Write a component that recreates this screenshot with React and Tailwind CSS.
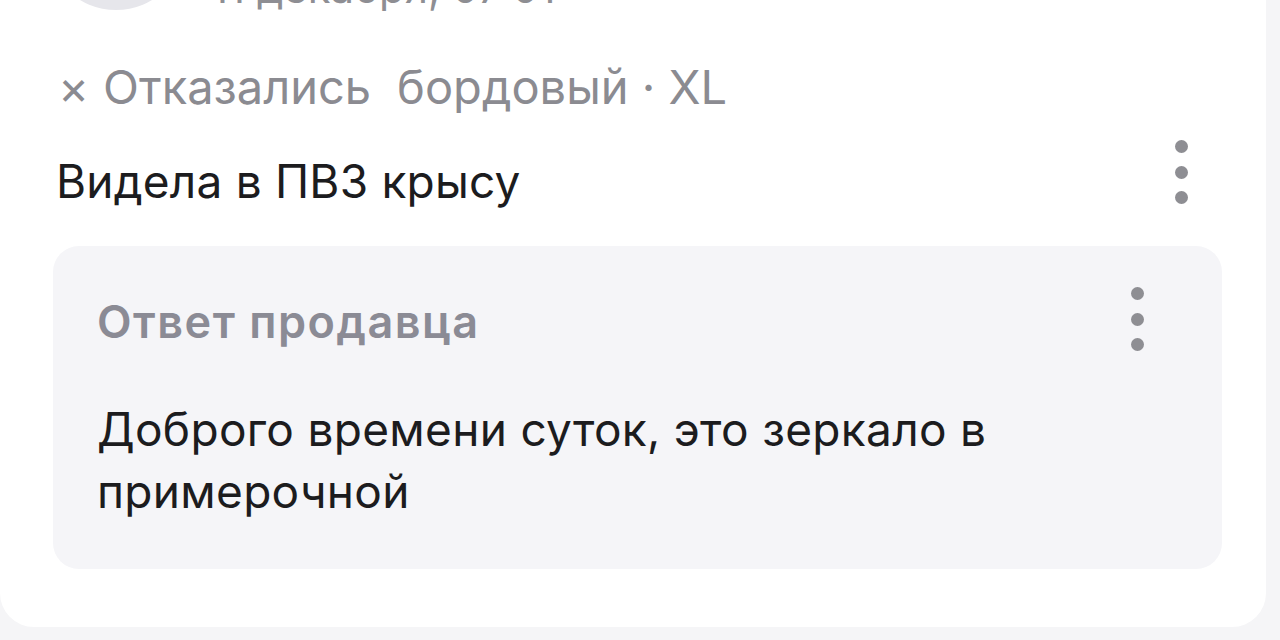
import React from 'react';

const Dots = ({ className = '' }) => (
  <div className={`flex flex-col items-center gap-[12.5px] ${className}`}>
    <span className="w-[13px] h-[13px] rounded-full bg-[#8e8e93]" />
    <span className="w-[13px] h-[13px] rounded-full bg-[#8e8e93]" />
    <span className="w-[13px] h-[13px] rounded-full bg-[#8e8e93]" />
  </div>
);

export default function App() {
  return (
    <div
      className="h-[640px] w-[1280px] overflow-hidden bg-[#f5f5f7]"
      style={{ fontFamily: 'Inter, Roboto, "Noto Sans", sans-serif' }}
    >
      <div className="-mt-[130px] w-[1266px] rounded-b-[34px] bg-white pl-[53px] pr-[44px] pb-[58px]">
        {/* header: avatar + name/date */}
        <div className="-ml-[7px] flex items-end gap-[25px]">
          <div className="h-[140px] w-[140px] shrink-0 rounded-full bg-[#e6e6eb]" />
          <div className="flex flex-col">
            <span className="text-[44px] leading-[56px] text-[#1c1c1e]">Покупатель</span>
            <span className="text-[42px] leading-[44px] text-[#8e8e93]">11 декабря, 07:01</span>
          </div>
        </div>

        {/* status line */}
        <div className="mt-[51px] flex items-center text-[47px] leading-[52px] text-[#8b8b91]">
          <span className="pl-[5px] pr-[14px]">×</span>
          <span>Отказались</span>
          <span className="ml-[26px]">бордовый · XL</span>
        </div>

        {/* review text */}
        <div className="mt-[40px] flex items-start justify-between">
          <p className="pl-[3px] text-[46px] tracking-[0.2px] leading-[56px] text-[#1c1c1e]">Видела в ПВЗ крысу</p>
          <Dots className="mr-[34px] -mt-[13px]" />
        </div>

        {/* seller reply */}
        <div className="mt-[37px] rounded-[26px] bg-[#f5f5f8] pl-[44px] pr-[78px] pt-[48px] pb-[47px]">
          <div className="flex items-start justify-between">
            <span className="text-[45px] font-semibold tracking-[1.5px] leading-[56px] text-[#8b8b95]">Ответ продавца</span>
            <Dots className="-mt-[7px]" />
          </div>
          <p className="mt-[47px] text-[46px] tracking-[0.3px] leading-[62px] text-[#1c1c1e]">
            Доброго времени суток, это зеркало в
            <br />
            примерочной
          </p>
        </div>
      </div>
    </div>
  );
}
